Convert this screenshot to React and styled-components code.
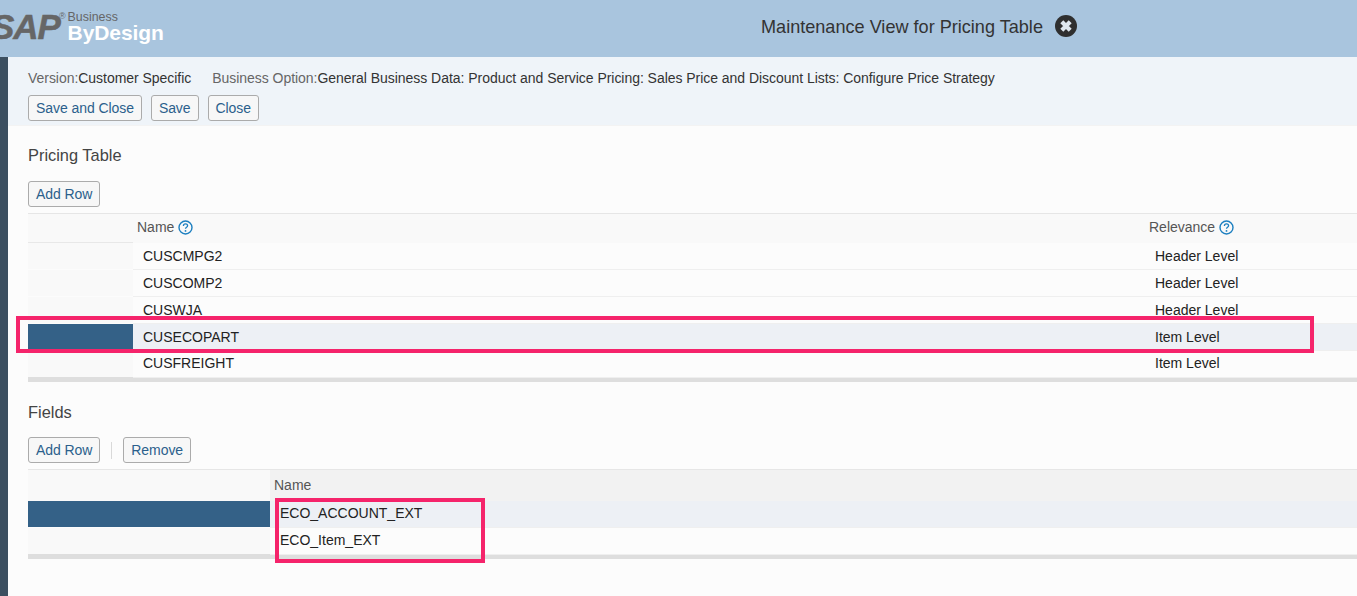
import React from "react";
import styled, { createGlobalStyle } from "styled-components";

const GlobalStyle = createGlobalStyle`
  html, body {
    margin: 0;
    padding: 0;
    background: #fcfcfc;
    font-family: "Liberation Sans", Arial, sans-serif;
    overflow: hidden;
  }
`;

const Page = styled.div`
  position: relative;
  width: 1357px;
  height: 596px;
  overflow: hidden;
  display: flex;
  flex-direction: column;
`;

const Header = styled.header`
  height: 57px;
  flex: none;
  box-sizing: border-box;
  background: #a9c5de;
  display: flex;
  align-items: center;
  padding-bottom: 2px;
`;

const Logo = styled.div`
  width: 770px;
  margin-left: -9px;
  flex: none;
  height: 34px;
  display: flex;
  margin-top: -1px;
`;

const LogoSap = styled.span`
  font-size: 35px;
  line-height: 34px;
  font-weight: 700;
  font-style: italic;
  letter-spacing: -1px;
  color: #666;
  -webkit-text-stroke: 0.5px #666;
`;

const LogoReg = styled.span`
  font-size: 9px;
  line-height: 10px;
  color: #666;
  margin: 1px 0 0 -1px;
`;

const LogoWords = styled.div`
  display: flex;
  flex-direction: column;
  margin: 1px 0 0 2px;
`;

const LogoBusiness = styled.span`
  font-size: 12.4px;
  line-height: 12px;
  color: #666;
`;

const LogoBy = styled.span`
  font-size: 21px;
  line-height: 20px;
  font-weight: 700;
  letter-spacing: -0.1px;
  color: #fff;
`;

const Title = styled.h1`
  margin: 0;
  font-size: 18.1px;
  font-weight: 400;
  color: #333;
`;

const CloseSvg = styled.svg`
  margin: 0 0 4px 12px;
`;

const Body = styled.div`
  flex: 1;
  display: flex;
`;

const Strip = styled.div`
  width: 8px;
  flex: none;
  background: #3c4f60;
`;

const Main = styled.main`
  flex: 1;
  min-width: 0;
`;

const Toolbar = styled.section`
  height: 69px;
  box-sizing: border-box;
  background: #eff4f9;
  border-bottom: 1px solid #f3f3f3;
  padding: 13px 0 0 20px;
`;

const Meta = styled.div`
  display: flex;
  gap: 21px;
  font-size: 14px;
  line-height: 16px;
  letter-spacing: -0.04px;
  color: #666;
  margin-bottom: 9px;
`;

const MetaValue = styled.span`
  color: #333;
`;

const Buttons = styled.div`
  display: flex;
  align-items: center;
  gap: ${(p) => p.$gap || 9}px;
`;

const Button = styled.button`
  height: 26px;
  box-sizing: border-box;
  padding: 0 7px;
  background: #f7f7f7;
  border: 1px solid #ababab;
  border-radius: 3px;
  font: 14px "Liberation Sans", Arial, sans-serif;
  letter-spacing: -0.07px;
  color: #2b5f8c;
`;

const Divider = styled.span`
  width: 1px;
  height: 17px;
  background: #d9d9d9;
`;

const Section = styled.section`
  padding: 0 0 0 20px;
`;

const SectionTitle = styled.h2`
  margin: 0;
  padding-top: ${(p) => p.$top}px;
  height: 18px;
  font-size: 16.4px;
  line-height: 18px;
  font-weight: 400;
  color: #444;
  margin-bottom: ${(p) => p.$bottom}px;
`;

const Table = styled.div`
  margin-top: 6px;
  border-top: 1px solid #e6e6e6;
`;

const Row = styled.div`
  display: grid;
  grid-template-columns: ${(p) => p.$cols};
  height: 26px;
  margin-bottom: 1px;
  font-size: 14px;
  line-height: ${(p) => p.$line}px;
  color: #222;
`;

const HeadRow = styled(Row)`
  margin-bottom: 0;
  height: ${(p) => p.$height}px;
  color: #555;
`;

const Selector = styled.div`
  background: ${(p) => (p.$selected ? "#346187" : "#f9f9f9")};
  box-shadow: ${(p) => (p.$rule ? "0 -1px 0 #e8e8e8" : "none")};
`;

const HeadCell = styled.div`
  background: ${(p) => p.$bg};
  padding: 0 0 ${(p) => p.$bottom}px ${(p) => p.$pad}px;
  display: flex;
  align-items: center;
  gap: 4px;
`;

const Cell = styled.div`
  padding-left: ${(p) => p.$pad || 10}px;
  background: ${(p) => (p.$selected ? "#edf0f5" : "#fcfcfc")};
  box-shadow: 0 1px 0 #efefef;
`;

const Scrollbar = styled.div`
  height: 5px;
  background: #dedede;
  margin-top: -1px;
`;

const Highlight = styled.div`
  position: absolute;
  box-sizing: border-box;
  border: 4px solid #f5246b;
  left: ${(p) => p.$x}px;
  top: ${(p) => p.$y}px;
  width: ${(p) => p.$w}px;
  height: ${(p) => p.$h}px;
`;

const CloseIcon = () => (
  <CloseSvg width="22" height="22" viewBox="0 0 22 22">
    <circle cx="11" cy="11" r="11" fill="#2f2f2f" />
    <path d="M6.8 6.8l8.4 8.4M15.2 6.8l-8.4 8.4" stroke="#dfe7ef" strokeWidth="4.2" />
  </CloseSvg>
);

const HelpIcon = () => (
  <svg width="15" height="15" viewBox="0 0 15 15">
    <circle cx="7.5" cy="7.5" r="6.5" fill="none" stroke="#1c7fc0" strokeWidth="1.4" />
    <path
      d="M5.4 5.9c0-1.3 1-2 2.1-2s2.1.7 2.1 1.9c0 1.5-2.1 1.5-2.1 3"
      fill="none"
      stroke="#1c7fc0"
      strokeWidth="1.3"
    />
    <circle cx="7.5" cy="10.9" r="0.9" fill="#1c7fc0" />
  </svg>
);

const pricingCols = "105px 984px 1fr";
const pricingRows = [
  { name: "CUSCMPG2", level: "Header Level" },
  { name: "CUSCOMP2", level: "Header Level" },
  { name: "CUSWJA", level: "Header Level" },
  { name: "CUSECOPART", level: "Item Level", selected: true },
  { name: "CUSFREIGHT", level: "Item Level", line: 24 },
];

const fieldCols = "242px 1fr";
const fieldRows = [
  { name: "ECO_ACCOUNT_EXT", selected: true },
  { name: "ECO_Item_EXT" },
];

export default function App() {
  return (
    <Page>
      <GlobalStyle />
      <Header>
        <Logo>
          <LogoSap>SAP</LogoSap>
          <LogoReg>®</LogoReg>
          <LogoWords>
            <LogoBusiness>Business</LogoBusiness>
            <LogoBy>ByDesign</LogoBy>
          </LogoWords>
        </Logo>
        <Title>Maintenance View for Pricing Table</Title>
        <CloseIcon />
      </Header>
      <Body>
        <Strip />
        <Main>
          <Toolbar>
            <Meta>
              <span>
                Version:<MetaValue>Customer Specific</MetaValue>
              </span>
              <span>
                Business Option:
                <MetaValue>
                  General Business Data: Product and Service Pricing: Sales Price and Discount Lists: Configure Price Strategy
                </MetaValue>
              </span>
            </Meta>
            <Buttons>
              <Button>Save and Close</Button>
              <Button>Save</Button>
              <Button>Close</Button>
            </Buttons>
          </Toolbar>
          <Section>
            <SectionTitle $top={20} $bottom={17}>Pricing Table</SectionTitle>
            <Buttons>
              <Button>Add Row</Button>
            </Buttons>
            <Table>
              <HeadRow $cols={pricingCols} $height={29} $line={26}>
                <Selector />
                <HeadCell $pad={4} $bottom={3} $bg="#f9f9f9">
                  Name <HelpIcon />
                </HeadCell>
                <HeadCell $pad={32} $bottom={3} $bg="#f9f9f9">
                  Relevance <HelpIcon />
                </HeadCell>
              </HeadRow>
              {pricingRows.map((row, i) => (
                <Row key={row.name} $cols={pricingCols} $line={row.line || 26}>
                  <Selector $selected={row.selected} $rule={i === 0} />
                  <Cell $selected={row.selected}>{row.name}</Cell>
                  <Cell $selected={row.selected} $pad={38}>{row.level}</Cell>
                </Row>
              ))}
              <Scrollbar />
            </Table>
          </Section>
          <Section>
            <SectionTitle $top={21} $bottom={16}>Fields</SectionTitle>
            <Buttons $gap={11}>
              <Button>Add Row</Button>
              <Divider />
              <Button>Remove</Button>
            </Buttons>
            <Table>
              <HeadRow $cols={fieldCols} $height={31} $line={26}>
                <Selector />
                <HeadCell $pad={4} $bottom={1} $bg="#f2f2f2">Name</HeadCell>
              </HeadRow>
              {fieldRows.map((row) => (
                <Row key={row.name} $cols={fieldCols} $line={24}>
                  <Selector $selected={row.selected} />
                  <Cell $selected={row.selected}>{row.name}</Cell>
                </Row>
              ))}
              <Scrollbar />
            </Table>
          </Section>
        </Main>
      </Body>
      <Highlight $x={16} $y={316} $w={1298} $h={37} />
      <Highlight $x={275} $y={498} $w={210} $h={65} />
    </Page>
  );
}
